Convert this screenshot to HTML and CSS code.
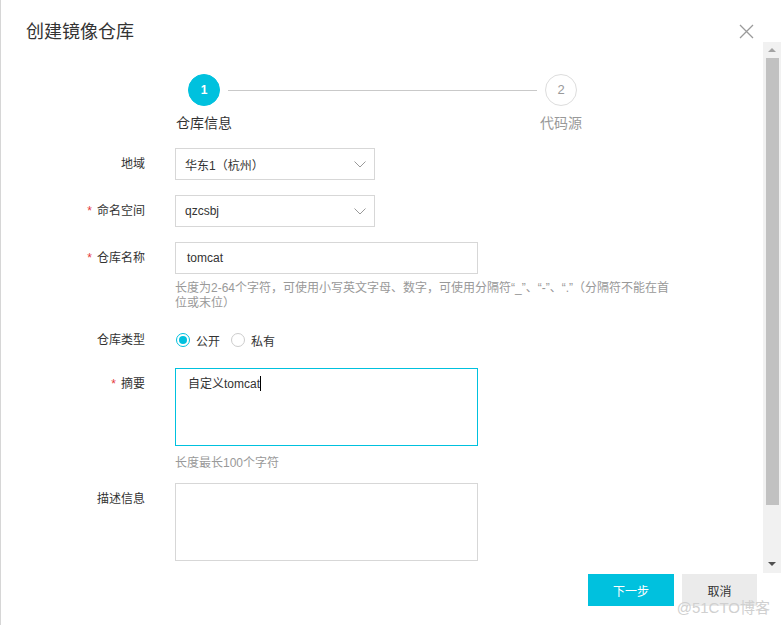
FILE: index.html
```html
<!DOCTYPE html>
<html lang="zh-CN">
  <head>
    <meta charset="UTF-8" />
    <meta name="viewport" content="width=device-width, initial-scale=1.0" />
    <title>创建镜像仓库</title>
    <link rel="stylesheet" href="styles.css">
  </head>
  <body>
    <div class="dialog">
      <div class="dialog-header">
        <h1 class="dialog-title">创建镜像仓库</h1>
        <svg class="close" width="15" height="15" viewBox="0 0 15 15">
          <path d="M1 1L14 14M14 1L1 14" stroke="#9a9a9a" stroke-width="1.3" fill="none" />
        </svg>
      </div>

      <div class="dialog-body">
        <div class="body-content">
          <div class="steps">
            <div class="step active">
              <span class="step-num">1</span>
              <span class="step-title">仓库信息</span>
            </div>
            <div class="step-line"></div>
            <div class="step">
              <span class="step-num">2</span>
              <span class="step-title">代码源</span>
            </div>
          </div>

          <form class="form">
            <div class="form-item item-select">
              <label class="form-label">地域</label>
              <div class="select">
                <span>华东1（杭州）</span>
                <svg width="12" height="7" viewBox="0 0 12 7"><path d="M0.5 0.5L6 6L11.5 0.5" stroke="#999" fill="none" /></svg>
              </div>
            </div>

            <div class="form-item item-select">
              <label class="form-label"><i class="required">*</i>命名空间</label>
              <div class="select">
                <span>qzcsbj</span>
                <svg width="12" height="7" viewBox="0 0 12 7"><path d="M0.5 0.5L6 6L11.5 0.5" stroke="#999" fill="none" /></svg>
              </div>
            </div>

            <div class="form-item item-name">
              <label class="form-label"><i class="required">*</i>仓库名称</label>
              <div class="form-control">
                <div class="input">tomcat</div>
                <p class="help">长度为2-64个字符，可使用小写英文字母、数字，可使用分隔符<span class="quote">“_”</span>、<span class="quote">“-”</span>、<span class="quote">“.”</span>（分隔符不能在首<br />位或末位）</p>
              </div>
            </div>

            <div class="form-item item-radio">
              <label class="form-label label-radio">仓库类型</label>
              <div class="radios">
                <span class="radio checked"><i></i>公开</span>
                <span class="radio"><i></i>私有</span>
              </div>
            </div>

            <div class="form-item item-summary">
              <label class="form-label"><i class="required">*</i>摘要</label>
              <div class="form-control">
                <div class="textarea focused">自定义tomcat<span class="caret"></span></div>
                <p class="help help-short">长度最长100个字符</p>
              </div>
            </div>

            <div class="form-item">
              <label class="form-label">描述信息</label>
              <div class="textarea"></div>
            </div>
          </form>
        </div>

        <div class="scrollbar">
          <span class="arrow-up"></span>
          <div class="thumb"></div>
          <span class="arrow-down"></span>
        </div>
      </div>

      <div class="dialog-footer">
        <button class="btn btn-primary">下一步</button>
        <button class="btn">取消</button>
      </div>

      <span class="watermark">@51CTO博客</span>
    </div>
  </body>
</html>
```

FILE: styles.css
```css
* {
  box-sizing: border-box;
}
body {
  margin: 0;
  font-family: "Liberation Sans", "Noto Sans CJK SC", sans-serif;
  font-size: 12px;
  color: #333;
  background-color: #fff;
  text-spacing-trim: space-all;
}
.dialog {
  position: relative;
  width: 781px;
  height: 625px;
  border-left: 1px solid #d6d6d6;
  background-color: #fff;
  overflow: hidden;
}
.dialog-header {
  display: flex;
  justify-content: space-between;
  align-items: flex-start;
  height: 42px;
  padding: 22px 27px 0 25px;
}
.dialog-title {
  margin: 0;
  font-size: 18px;
  font-weight: normal;
  line-height: 20px;
  color: #333;
}
.close {
  margin-top: 2px;
}
.dialog-body {
  display: flex;
  height: 531px;
}
.body-content {
  flex: 1;
  overflow: hidden;
}

/* steps */
.steps {
  display: flex;
  align-items: flex-start;
  margin-top: 32px;
  padding-left: 187px;
}
.step {
  display: flex;
  flex-direction: column;
  align-items: center;
  width: 32px;
}
.step-num {
  width: 32px;
  height: 32px;
  border: 1px solid #ddd;
  border-radius: 50%;
  text-align: center;
  line-height: 30px;
  font-size: 13px;
  color: #999;
}
.step-title {
  margin-top: 7px;
  white-space: nowrap;
  font-size: 14px;
  line-height: 20px;
  color: #999;
}
.step.active .step-num {
  border-color: #00c1de;
  background-color: #00c1de;
  color: #fff;
  font-weight: bold;
  font-size: 12px;
}
.step.active .step-title {
  color: #333;
}
.step-line {
  width: 309px;
  height: 1px;
  margin: 16px 8px 0;
  background-color: #c9c9c9;
}

/* form */
.form {
  margin-top: 15px;
}
.form-item {
  display: flex;
  align-items: flex-start;
}
.form-label {
  width: 174px;
  padding-right: 30px;
  text-align: right;
  line-height: 32px;
  color: #333;
}
.required {
  font-style: normal;
  color: #e4393c;
  margin-right: 5px;
}
.item-select {
  margin-bottom: 15px;
}
.select {
  display: flex;
  justify-content: space-between;
  align-items: center;
  width: 200px;
  height: 32px;
  padding: 0 8px 0 9px;
  border: 1px solid #d7d7d7;
}
.input {
  width: 303px;
  height: 32px;
  padding: 0 11px;
  border: 1px solid #d7d7d7;
  line-height: 30px;
}
.help {
  margin: 7px 0 0;
  white-space: nowrap;
  line-height: 15px;
  color: #999;
}
.quote {
  font-family: "Liberation Sans", sans-serif;
}
.item-name {
  margin-bottom: 19px;
}
.item-radio {
  margin-bottom: 18px;
}
.label-radio {
  line-height: 20px;
}
.radios {
  display: flex;
  align-items: center;
  height: 20px;
  padding-left: 1px;
}
.radio {
  display: flex;
  align-items: center;
  margin-right: 11px;
}
.radio i {
  position: relative;
  width: 14px;
  height: 14px;
  margin-right: 6px;
  border: 1px solid #ccc;
  border-radius: 50%;
}
.radio.checked i {
  border-color: #00c1de;
}
.radio.checked i::after {
  content: "";
  position: absolute;
  top: 2px;
  left: 2px;
  width: 8px;
  height: 8px;
  border-radius: 50%;
  background-color: #00c1de;
}
.textarea {
  width: 303px;
  height: 78px;
  padding: 7px 12px;
  border: 1px solid #d7d7d7;
  line-height: 16px;
}
.textarea.focused {
  border-color: #00c1de;
}
.caret {
  display: inline-block;
  width: 1px;
  height: 15px;
  vertical-align: -3px;
  background-color: #000;
}
.help-short {
  margin-top: 10px;
}
.item-summary {
  margin-bottom: 12px;
}

/* fake scrollbar */
.scrollbar {
  display: flex;
  flex-direction: column;
  align-items: center;
  width: 18px;
  height: 531px;
  background-color: #f1f1f1;
}
.arrow-up {
  margin-top: 6px;
  border-left: 4px solid transparent;
  border-right: 4px solid transparent;
  border-bottom: 4px solid #a3a3a3;
}
.thumb {
  width: 13px;
  height: 447px;
  margin-top: 6px;
  background-color: #c1c1c1;
}
.arrow-down {
  margin-top: auto;
  margin-bottom: 7px;
  border-left: 4px solid transparent;
  border-right: 4px solid transparent;
  border-top: 4px solid #505050;
}

/* footer */
.dialog-footer {
  display: flex;
  justify-content: flex-end;
  gap: 8px;
  padding: 1px 24px 0 0;
}
.btn {
  height: 32px;
  min-width: 75px;
  padding: 0 12px;
  border: none;
  background-color: #ebebeb;
  color: #333;
  font-family: inherit;
  font-size: 12px;
}
.btn-primary {
  width: 86px;
  background-color: #00c1de;
  color: #fff;
}
.watermark {
  position: absolute;
  right: 11px;
  bottom: 8px;
  font-size: 15px;
  color: #d0d0d0;
}
```
